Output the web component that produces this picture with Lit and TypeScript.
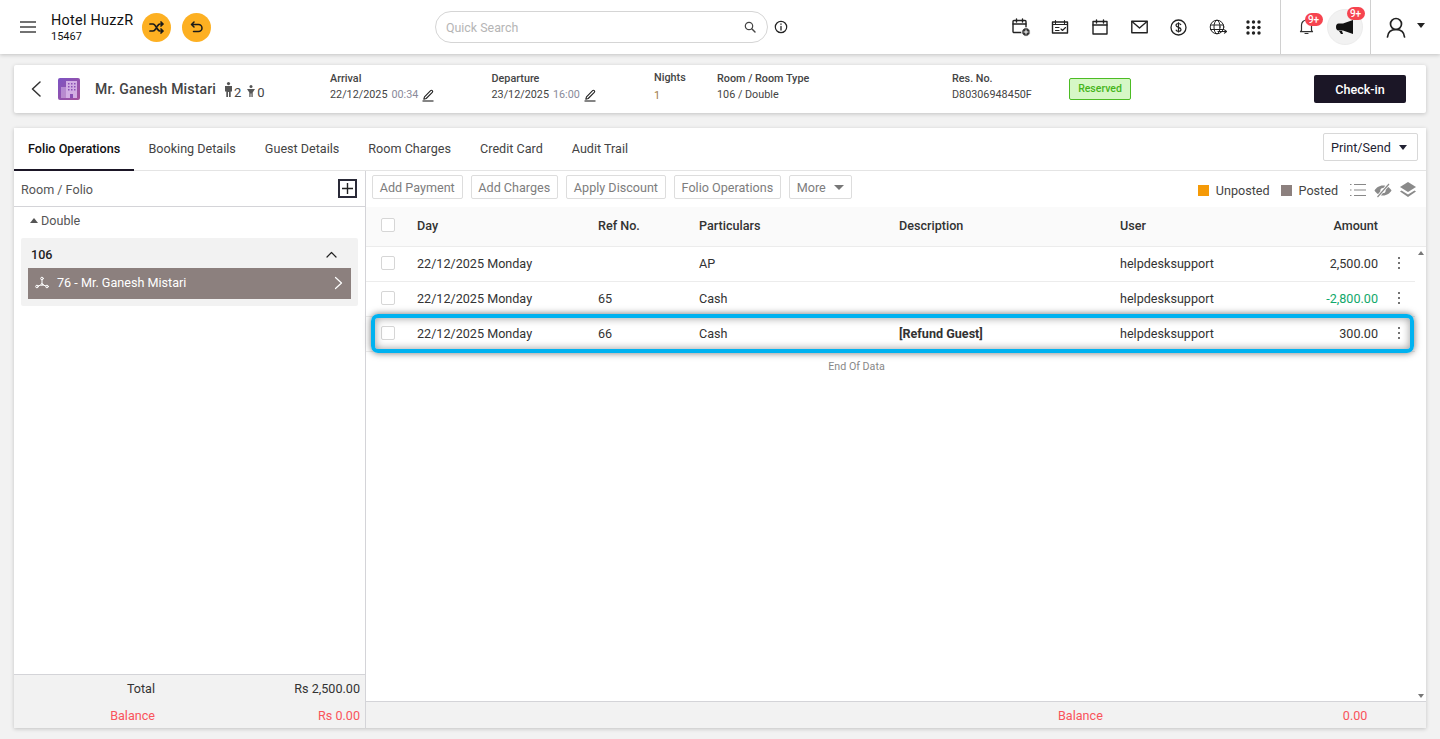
import { LitElement, html, css, svg } from "lit";
import { customElement } from "lit/decorators.js";

const ic = (w: number, h: number, vb: string, body: unknown, cls = "") =>
  html`<svg class="${cls}" width="${w}" height="${h}" viewBox="${vb}" fill="none" stroke="currentColor" stroke-width="1.4" stroke-linecap="round" stroke-linejoin="round">${body}</svg>`;

const pencil = () => ic(14, 14, "0 0 14 14", svg`<path d="M3.5 8.8 9.6 2.7c.5-.5 1.2-.5 1.7 0s.5 1.2 0 1.7L5.2 10.5l-2.4.7z" stroke-width="1.1"/><path d="M1.5 13h11" stroke-linecap="butt" stroke-width="1.1"/>`);

const rows = [
  { day: "22/12/2025 Monday", ref: "", part: "AP", desc: "", user: "helpdesksupport", amt: "2,500.00", neg: false, hl: false },
  { day: "22/12/2025 Monday", ref: "65", part: "Cash", desc: "", user: "helpdesksupport", amt: "-2,800.00", neg: true, hl: false },
  { day: "22/12/2025 Monday", ref: "66", part: "Cash", desc: "[Refund Guest]", user: "helpdesksupport", amt: "300.00", neg: false, hl: true },
];

@customElement("app-root")
export class AppRoot extends LitElement {
  static styles = css`
    :host { display: block; width: 1440px; height: 739px; overflow: hidden; background: #f2f2f2; font-family: Roboto, sans-serif; color: #333; font-size: 12.6px; }
    * { box-sizing: border-box; }
    svg { display: block; flex: none; }
    .top { height: 54px; background: #fff; box-shadow: 0 1px 4px rgba(0,0,0,.2); display: flex; align-items: center; position: relative; }
    .burger { margin-left: 20px; width: 16px; color: #444; }
    .hotel { margin-left: 15px; width: 91px; color: #111; }
    .hotel b { display: block; font-weight: 400; font-size: 14.4px; line-height: 17px; letter-spacing: .28px; white-space: nowrap; }
    .hotel span { display: block; font-size: 11px; line-height: 13px; padding-top: 1px; }
    .round { width: 29px; height: 29px; border-radius: 50%; background: #fdb022; display: flex; align-items: center; justify-content: center; color: #1a1a1a; }
    .round + .round { margin-left: 11px; }
    .search { margin-left: 224px; width: 333px; height: 32px; border: 1px solid #d5d5d5; border-radius: 16px; display: flex; align-items: center; justify-content: space-between; padding: 0 11px 0 10px; color: #b5b5b5; font-size: 12.4px; }
    .search svg { color: #444; }
    .info { margin-left: 6px; color: #222; }
    .tools { margin-left: 213px; display: flex; align-items: center; color: #222; height: 54px; }
    .tool { width: 39.5px; display: flex; justify-content: center; }
    .tool:last-child { margin-left: -4px; }
    .sep { margin-left: 6px; width: 91px; height: 54px; border-left: 1px solid #d0d0d0; border-right: 1px solid #d0d0d0; display: flex; align-items: center; position: relative; }
    .bell { margin-left: 18px; margin-top: -2px; }
    .horn { margin-left: 13px; width: 36px; height: 36px; border-radius: 50%; background: #f2f2f2; display: flex; align-items: center; justify-content: center; border: 1px solid #ececec; }
    .badge { position: absolute; background: #f6444f; color: #fff; border-radius: 8px; font-size: 10px; font-weight: 500; line-height: 13px; width: 18px; text-align: center; }
    .b1 { left: 24px; top: 13px; }
    .b2 { left: 66px; top: 7px; }
    .user { margin-left: 15px; display: flex; align-items: center; color: #222; }
    .caret { width: 0; height: 0; border-left: 4.5px solid transparent; border-right: 4.5px solid transparent; border-top: 5px solid currentColor; }
    .user .caret { margin-left: 11px; margin-top: -4px; }

    .guest { margin: 11px 14px 0; height: 48px; background: #fff; border-radius: 2px; box-shadow: 0 1px 4px rgba(0,0,0,.2); display: flex; align-items: center; position: relative; }
    .back { margin-left: 16px; color: #333; }
    .bld { margin-left: 16px; width: 22px; height: 22px; border-radius: 2px; background: linear-gradient(135deg,#7c53c3,#a5519b); }
    .gname { margin-left: 15px; width: 124px; font-size: 14px; font-weight: 500; color: #444; letter-spacing: .16px; white-space: nowrap; }
    .pax { display: flex; align-items: center; width: 111px; color: #444; font-size: 13px; }
    .pax svg { color: #555; }
    .pax span { margin: 6px 0 0 2px; }
    .man { margin-left: 6px; }
    .pax .kid { margin-left: 6px; margin-top: 3px; }
    .meta { font-size: 10.8px; line-height: 16px; color: #444; white-space: nowrap; padding-bottom: 4px; }
    .meta h4 { margin: 0; font-weight: 500; font-size: 10.8px; line-height: 16px; color: #444; }
    .meta div { display: flex; align-items: center; }
    .meta i { font-style: normal; color: #8a8a9a; margin-left: 4px; }
    .meta svg { margin-left: 3px; color: #222; }
    .m1 { width: 161.500px; } .m2 { width: 162.500px; } .m3 { width: 63px; } .m4 { width: 235px; } .m5 { width: 117px; }
    .meta .nights { color: #a07b45; padding-top: 2px; }
    .tag { width: 62px; height: 22px; background: #d6f7c6; border: 1px solid #4cbc24; border-radius: 2px; color: #45b51c; font-size: 10.5px; font-weight: 500; display: flex; align-items: center; justify-content: center; padding-bottom: 1px; }
    .checkin { margin-left: auto; margin-right: 20px; width: 92px; height: 28px; background: #1b1626; color: #fff; border-radius: 2px; font-size: 12.6px; font-weight: 500; display: flex; align-items: center; justify-content: center; }

    .card { margin: 15px 14px 0; height: 600px; background: #fff; box-shadow: 0 1px 4px rgba(0,0,0,.2); display: flex; flex-direction: column; }
    .tabs { height: 43px; display: flex; align-items: stretch; border-bottom: 1px solid #e4e4e4; padding-right: 8px; color: #444; flex: none; }
    .tab { padding: 0 14.500px; display: flex; align-items: center; margin-bottom: -1px; border-bottom: 2px solid transparent; }
    .tab.on { color: #111; font-weight: 500; border-bottom-color: #1b1626; width: 120px; padding: 0 14px; white-space: nowrap; }
    .print { margin: 5px 0 0 auto; width: 95px; height: 28px; border: 1px solid #d8d8d8; border-radius: 2px; display: flex; align-items: center; justify-content: space-between; padding: 0 10px 0 7px; color: #223; }
    .split { flex: 1; display: flex; min-height: 0; }
    .left { width: 352px; border-right: 1px solid #d4d4d8; display: flex; flex-direction: column; flex: none; }
    .lhead { height: 36px; border-bottom: 1px solid #d4d4d8; display: flex; align-items: center; justify-content: space-between; padding: 1px 8px 0 7px; color: #555; }
    .plus { width: 19px; height: 19px; border: 2px solid #2a2a38; display: flex; align-items: center; justify-content: center; color: #222; margin-top: -2px; }
    .dbl { height: 31px; padding: 0 0 4px 16px; display: flex; align-items: center; color: #555; gap: 3px; }
    .up { width: 0; height: 0; border-left: 4px solid transparent; border-right: 4px solid transparent; border-bottom: 5px solid #555; }
    .room { margin: 0 7px; height: 68px; background: #f2f2f2; border-radius: 2px; padding: 0 7px; }
    .rhead { height: 30px; display: flex; align-items: center; justify-content: space-between; padding: 2px 14px 0 3px; color: #222; font-weight: 500; }
    .folio { height: 31px; background: #8c807e; color: #fff; display: flex; align-items: center; padding: 0 8px 2px 7px; }
    .folio span { margin-left: 8px; flex: 1; font-weight: 400; }
    .lfoot { margin-top: auto; height: 54px; background: #f2f2f2; border-top: 1px solid #d4d4d8; display: grid; grid-template-columns: 141px 1fr; grid-auto-rows: 27px; align-items: center; text-align: right; padding-right: 5px; color: #333; }
    .red { color: #f9545b; }
    .right { flex: 1; display: flex; flex-direction: column; min-width: 0; }
    .bar { height: 36px; flex: none; display: flex; align-items: center; padding: 0 10px 4px 6px; }
    .btn { height: 24px; border: 1px solid #ddd; border-radius: 2px; padding: 0 6.800px; display: flex; align-items: center; color: #7d7d7d; margin-right: 8px; white-space: nowrap; }
    .btn .caret { margin-left: 8px; color: #777; border-left-width: 5px; border-right-width: 5px; }
    .legend { margin-left: auto; margin-top: 6px; display: flex; align-items: center; color: #444; }
    .sq { width: 11px; height: 11px; margin-right: 7px; }
    .sq.un { background: #f59a07; }
    .sq.po { background: #8c807e; }
    .legend span { margin-right: 11px; }
    .legend svg { color: #888; }
    .legend .eye { margin-left: 7px; }
    .legend .layers { margin-left: 8px; }
    .thead, .row { display: grid; grid-template-columns: 51px 181px 101px 200px 221px 147px 111px 37px; align-items: center; }
    .thead { height: 40px; background: #fafafa; border-bottom: 1px solid #ececec; color: #333; font-weight: 500; flex: none; padding-bottom: 3px; }
    .row { height: 35px; border-bottom: 1px solid #ececec; color: #333; position: relative; padding-bottom: 2px; }
    .tb { position: relative; flex: 1; min-height: 0; padding-right: 11px; }
    .chk { margin-left: 15px; width: 14px; height: 14px; border: 1px solid #d6d6d6; border-radius: 2px; background: #fff; }
    .amt { text-align: right; }
    .neg { color: #11a86b; }
    .dots { justify-self: center; display: flex; flex-direction: column; gap: 3px; margin-left: 5px; }
    .dots b { width: 2px; height: 2px; background: #444; display: block; border-radius: 1px; }
    .desc { font-weight: 700; }
    .hl { position: absolute; left: 5px; top: -3px; right: 1px; bottom: -2px; border: 4px solid #00b2f0; border-radius: 7px; box-shadow: 0 0 7px rgba(0,0,0,.55), inset 0 0 9px rgba(0,0,0,.4); pointer-events: none; }
    .end { font-size: 10.7px; color: #888; margin-top: 8px; padding-right: 68px; text-align: center; }
    .sa { position: absolute; right: 2px; width: 0; height: 0; border-left: 3.5px solid transparent; border-right: 3.5px solid transparent; }
    .sa.u { top: 4px; border-bottom: 4px solid #777; }
    .sa.d { bottom: 3px; border-top: 4px solid #777; }
    .rfoot { height: 27px; flex: none; background: #f2f2f2; border-top: 1px solid #d4d4d8; display: flex; align-items: center; }
    .rfoot .a { margin-left: 692px; }
    .rfoot .b { margin-left: 240px; }
  `;

  render() {
    return html`
      <div class="top">
        <div class="burger">${ic(16, 12, "0 0 16 12", svg`<path d="M0 1h16M0 6h16M0 11h16" stroke-linecap="butt"/>`)}</div>
        <div class="hotel"><b>Hotel HuzzR</b><span>15467</span></div>
        <div class="round">${ic(15, 13, "0 0 15 13", svg`<path d="M1 3h3c3 0 4 7 7 7h3M1 10h3c1.300 0 2-1 2.600-2M8.500 5c.6-1 1.300-2 2.500-2h3M12 1l2 2-2 2M12 8l2 2-2 2" stroke-width="1.700"/>`)}</div>
        <div class="round">${ic(13, 12, "0 0 13 12", svg`<path d="M4 1 1.500 3.500 4 6M2 3.500h6.500a3 3 0 0 1 0 7H3.500" stroke-width="1.500"/>`)}</div>
        <div class="search"><span>Quick Search</span>${ic(12, 12, "0 0 12 12", svg`<circle cx="5" cy="5" r="3.700" stroke-width="1.200"/><path d="m8 8 3 3" stroke-width="1.400"/>`)}</div>
        <div class="info">${ic(14, 14, "0 0 14 14", svg`<circle cx="7" cy="7" r="5.700" stroke-width="1.200"/><path d="M7 6.500V10M7 4v.3" stroke-width="1.300"/>`)}</div>
        <div class="tools">
          <div class="tool">${ic(20, 20, "0 0 20 20", svg`<rect x="2" y="3.500" width="13" height="12" rx="1"/><path d="M2 7h13M5.500 2v3M11.500 2v3"/><circle cx="15" cy="15" r="4.300" fill="#333" stroke="#fff" stroke-width="1"/><path d="M13 15h4M15 13v4" stroke="#fff" stroke-width="1"/>`)}</div>
          <div class="tool">${ic(18, 16, "0 0 18 16", svg`<rect x="1.500" y="3" width="15" height="11"/><path d="M4.500 1.500v3M13.500 1.500v3M1.500 5.500h15M4.500 8.500H8M4.500 11.500H8M10 10l1.500 1.500 3-3" stroke-width="1.100"/>`)}</div>
          <div class="tool">${ic(16, 16, "0 0 16 16", svg`<rect x="1" y="2.500" width="14" height="12.500"/><path d="M1 6h14M4.500 1v3M11.500 1v3"/>`)}</div>
          <div class="tool">${ic(17, 14, "0 0 17 14", svg`<rect x=".8" y="1.300" width="15.400" height="11.500"/><path d="m1 1.500 7.500 6.500 7.500-6.500"/>`)}</div>
          <div class="tool"><svg width="17" height="17" viewBox="0 0 17 17" fill="none"><circle cx="8.500" cy="8.500" r="7.500" stroke="#222" stroke-width="1.300"/><path d="M11 6c-.4-1-1.400-1.500-2.500-1.500C7 4.500 6 5.200 6 6.300c0 2.700 5 1.400 5 4.200 0 1.100-1 1.900-2.500 1.900-1.200 0-2.200-.5-2.600-1.600M8.500 3.300v10.300" stroke="#222" stroke-width="1.200"/></svg></div>
          <div class="tool">${ic(18, 16, "0 0 18 16", svg`<circle cx="8" cy="8" r="6.800" stroke-width="1"/><ellipse cx="8" cy="8" rx="3" ry="6.800" stroke-width="1"/><path d="M1.500 6h13M1.500 10.500h13" stroke-width="1"/><path d="M9 12.500h8.500M15.500 10.800l2 1.700-2 1.700" stroke-width="1.100"/>`)}</div>
          <div class="tool"><svg width="15" height="15" viewBox="0 0 15 15" fill="#222"><circle cx="2" cy="2" r="1.700"/><circle cx="7.500" cy="2" r="1.700"/><circle cx="13" cy="2" r="1.700"/><circle cx="2" cy="7.500" r="1.700"/><circle cx="7.500" cy="7.500" r="1.700"/><circle cx="13" cy="7.500" r="1.700"/><circle cx="2" cy="13" r="1.700"/><circle cx="7.500" cy="13" r="1.700"/><circle cx="13" cy="13" r="1.700"/></svg></div>
        </div>
        <div class="sep">
          <div class="bell">${ic(15, 17, "0 0 15 17", svg`<path d="M2.500 12.500V7a5 5 0 0 1 10 0v5.500l1 1.200H1.500zM6 15.500h3" stroke-width="1.200"/>`)}</div>
          <div class="horn"><svg width="18" height="15" viewBox="0 0 18 15" fill="#111"><path d="M17 0v14L7 10.500H2.500C1 10.500 0 9 0 7s1-3.500 2.500-3.500H7z"/><path d="M3 11h3l1 3H5z"/></svg></div>
          <div class="badge b1">9+</div>
          <div class="badge b2">9+</div>
        </div>
        <div class="user">${ic(20, 21, "0 0 20 21", svg`<circle cx="10" cy="7" r="5.500" stroke-width="1.700"/><path d="M1.500 20c.4-4.500 3.500-7.500 8.500-7.500s8.100 3 8.500 7.500" stroke-width="1.700"/>`)}<div class="caret"></div></div>
      </div>

      <div class="guest">
        <div class="back">${ic(12, 16, "0 0 12 16", svg`<path d="M10 1 2.500 8l7.500 7" stroke-width="1.500"/>`)}</div>
        <div class="bld"><svg width="22" height="22" viewBox="0 0 22 22"><g fill="#d9b8ea"><rect x="8" y="3" width="11" height="17" opacity=".9"/><rect x="3" y="9" width="5" height="11" opacity=".55"/></g><g fill="#8a4fb5"><rect x="10" y="5" width="1.500" height="1.500"/><rect x="13" y="5" width="1.500" height="1.500"/><rect x="16" y="5" width="1.500" height="1.500"/><rect x="10" y="8" width="1.500" height="1.500"/><rect x="13" y="8" width="1.500" height="1.500"/><rect x="16" y="8" width="1.500" height="1.500"/><rect x="10" y="11" width="1.500" height="1.500"/><rect x="13" y="11" width="1.500" height="1.500"/><rect x="16" y="11" width="1.500" height="1.500"/><rect x="12" y="16" width="3" height="4"/></g></svg></div>
        <div class="gname">Mr. Ganesh Mistari</div>
        <div class="pax">
          <svg class="man" width="7" height="15" viewBox="0 0 7 15" fill="currentColor"><circle cx="3.500" cy="1.600" r="1.600"/><path d="M0 4h7v5.500H5.700V15H4V10H3v5H1.300V9.500H0z"/></svg><span>2</span>
          <svg class="kid" width="8" height="12" viewBox="0 0 8 12" fill="currentColor"><circle cx="4" cy="1.500" r="1.500"/><path d="M0 4h8L5.700 7.500V12H4.400V8.500h-.8V12H2.300V7.500z"/></svg><span>0</span>
        </div>
        <div class="meta m1"><h4>Arrival</h4><div>22/12/2025 <i>00:34</i>${pencil()}</div></div>
        <div class="meta m2"><h4>Departure</h4><div>23/12/2025 <i>16:00</i>${pencil()}</div></div>
        <div class="meta m3"><h4>Nights</h4><div class="nights">1</div></div>
        <div class="meta m4"><h4>Room / Room Type</h4><div>106 / Double</div></div>
        <div class="meta m5"><h4>Res. No.</h4><div>D80306948450F</div></div>
        <div class="tag">Reserved</div>
        <div class="checkin">Check-in</div>
      </div>

      <div class="card">
        <div class="tabs">
          <div class="tab on">Folio Operations</div>
          <div class="tab">Booking Details</div>
          <div class="tab">Guest Details</div>
          <div class="tab">Room Charges</div>
          <div class="tab">Credit Card</div>
          <div class="tab">Audit Trail</div>
          <div class="print"><span>Print/Send</span><div class="caret"></div></div>
        </div>
        <div class="split">
          <div class="left">
            <div class="lhead"><span>Room / Folio</span><div class="plus">${ic(13, 13, "0 0 13 13", svg`<path d="M6.500 1v11M1 6.500h11" stroke-linecap="butt"/>`)}</div></div>
            <div class="dbl"><div class="up"></div>Double</div>
            <div class="room">
              <div class="rhead"><span>106</span>${ic(11, 7, "0 0 11 7", svg`<path d="m1 6 4.500-4.500L10 6" stroke-width="1.200"/>`)}</div>
              <div class="folio">
                ${ic(14, 13, "0 0 14 13", svg`<circle cx="7" cy="2.500" r="1.300" stroke-width="1"/><circle cx="2" cy="10.500" r="1.300" stroke-width="1"/><circle cx="12" cy="10.500" r="1.300" stroke-width="1"/><circle cx="7" cy="8.500" r="1" stroke-width="1"/><path d="M7 4v3.500M6 9 3 10M8 9l3 1" stroke-width="1"/>`)}
                <span>76 - Mr. Ganesh Mistari</span>
                ${ic(9, 14, "0 0 9 14", svg`<path d="m1.500 1.500 6 5.500-6 5.500" stroke-width="1.200"/>`)}
              </div>
            </div>
            <div class="lfoot">
              <span>Total</span><span>Rs 2,500.00</span>
              <span class="red">Balance</span><span class="red">Rs 0.00</span>
            </div>
          </div>
          <div class="right">
            <div class="bar">
              <div class="btn">Add Payment</div>
              <div class="btn">Add Charges</div>
              <div class="btn">Apply Discount</div>
              <div class="btn">Folio Operations</div>
              <div class="btn">More<div class="caret"></div></div>
              <div class="legend">
                <div class="sq un"></div><span>Unposted</span>
                <div class="sq po"></div><span>Posted</span>
                ${ic(18, 14, "0 0 18 14", svg`<path d="M1 1.500h1.500M1 7h1.500M1 12.500h1.500M5 1.500h12M5 7h12M5 12.500h12" stroke-linecap="butt" stroke-width="1.200"/>`)}
                <svg class="eye" width="18" height="15" viewBox="0 0 18 15" fill="#8a8a8a"><path d="M9 2.500C5 2.500 2 5 .5 7.500 2 10 5 12.500 9 12.500S16 10 17.500 7.500C16 5 13 2.500 9 2.500z"/><circle cx="9" cy="7.500" r="2.600" fill="#fff"/><path d="M15 .8 3.500 14" stroke="#fff" stroke-width="3"/><path d="M15 1 3.500 14" stroke="#8a8a8a" stroke-width="1.200"/></svg>
                <svg class="layers" width="16" height="16" viewBox="0 0 16 16" fill="#8a8a8a"><path d="M8 0 0 5l8 5 8-5z"/><path d="m1.500 8.500-1.500 1 8 5.500 8-5.500-1.500-1L8 12.500z"/></svg>
              </div>
            </div>
            <div class="thead">
              <div class="chk"></div><div>Day</div><div>Ref No.</div><div>Particulars</div><div>Description</div><div>User</div><div class="amt">Amount</div><div></div>
            </div>
            <div class="tb">
              <div class="sa u"></div>
              ${rows.map(r => html`
                <div class="row">
                  <div class="chk"></div><div>${r.day}</div><div>${r.ref}</div><div>${r.part}</div><div class="desc">${r.desc}</div><div>${r.user}</div>
                  <div class="amt ${r.neg ? "neg" : ""}">${r.amt}</div>
                  <div class="dots"><b></b><b></b><b></b></div>
                  ${r.hl ? html`<div class="hl"></div>` : ""}
                </div>`)}
              <div class="end">End Of Data</div>
              <div class="sa d"></div>
            </div>
            <div class="rfoot red"><span class="a">Balance</span><span class="b">0.00</span></div>
          </div>
        </div>
      </div>
    `;
  }
}
